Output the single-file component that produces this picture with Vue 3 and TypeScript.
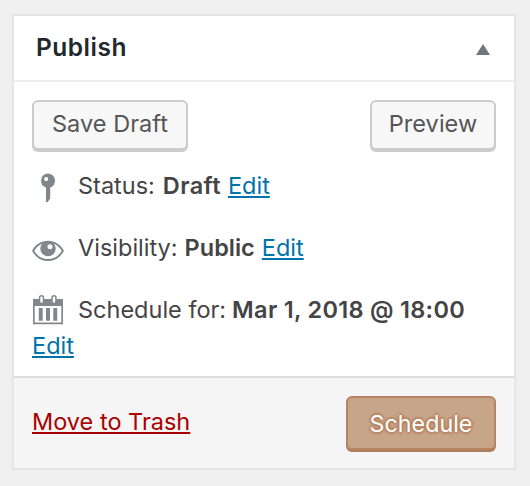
<script setup lang="ts">
interface Detail {
  id: string
  icon: 'key' | 'eye' | 'calendar'
  label: string
  value: string
}

const details: Detail[] = [
  { id: 'status', icon: 'key', label: 'Status:', value: 'Draft' },
  { id: 'visibility', icon: 'eye', label: 'Visibility:', value: 'Public' },
  { id: 'schedule', icon: 'calendar', label: 'Schedule for:', value: 'Mar 1, 2018 @ 18:00' },
]
</script>

<template>
  <section class="panel">
    <header class="panel-header">
      <h2 class="title">Publish</h2>
      <svg class="toggle" viewBox="0 0 14 11" aria-hidden="true"><path d="M7 0L14 11H0Z" /></svg>
    </header>
    <div class="panel-body">
      <div class="actions">
        <button class="button" type="button">Save Draft</button>
        <button class="button preview" type="button">Preview</button>
      </div>
      <div v-for="item in details" :key="item.id" class="detail" :class="item.id">
        <svg class="icon" viewBox="0 0 32 36" aria-hidden="true">
          <path
            v-if="item.icon === 'key'"
            fill-rule="evenodd"
            d="M16 5.5a7.2 7.2 0 0 1 2.2 14v11l-2.5 3.5H14V19.5A7.2 7.2 0 0 1 16 5.5ZM14.2 9a2.1 2.1 0 1 0 0 4.2a2.1 2.1 0 0 0 0-4.2Z"
          />
          <path
            v-else-if="item.icon === 'eye'"
            fill-rule="evenodd"
            d="M16 10.800C23 10.800 28.600 14.600 32 20.800C28.600 27.200 23 31 16 31S3.400 27.200 0 20.800C3.400 14.600 9 10.800 16 10.800ZM10 13.800C6.800 15.200 4.200 17.800 2.300 20.800C5.200 26 10 29 16 29S26.800 26 29.700 20.800C27.800 17.800 25.200 15.200 22 13.800A7.700 7.700 0 1 1 10 13.800ZM18 14.200a2.500 2.500 0 1 0 0 5a2.500 2.500 0 0 0 0-5Z"
          />
          <path
            v-else
            fill-rule="evenodd"
            d="M1 7H6.800V5.700a2.700 2.700 0 0 1 5.400 0V7H19.300V5.700a2.700 2.700 0 0 1 5.400 0V7H31V32.200H1ZM2.700 14V30.500H29.300V14ZM6.800 16H10.700V28.700H6.800ZM14 16H18V28.700H14ZM21.300 16H25.200V28.700H21.300ZM9.500 4.500a1.200 1.200 0 0 0-1.200 1.200V9.500a1.200 1.200 0 0 0 2.400 0V5.700A1.200 1.200 0 0 0 9.500 4.500ZM22 4.500a1.200 1.200 0 0 0-1.200 1.200V9.500a1.200 1.200 0 0 0 2.400 0V5.700A1.200 1.200 0 0 0 22 4.500Z"
          />
        </svg>
        <span class="label">{{ item.label }}</span>
        <strong class="value">{{ item.value }}</strong>
        <a class="edit">Edit</a>
      </div>
    </div>
    <footer class="panel-footer">
      <a class="trash">Move to Trash</a>
      <button class="button primary" type="button">Schedule</button>
    </footer>
  </section>
</template>

<style>
body {
  background: #f0f0f0;
}
</style>

<style scoped>
.panel {
  box-sizing: border-box;
  width: 504px;
  height: 456px;
  margin: 14px 0 0 12px;
  border: 2px solid #e5e5e5;
  background: #fff;
  box-shadow: 0 2px 2px rgba(0, 0, 0, 0.04);
  color: #444;
  font: 24px/36px Inter, "Liberation Sans", sans-serif;
  display: flex;
  flex-direction: column;
}
.panel-header {
  box-sizing: border-box;
  height: 66px;
  padding: 0 24px 2px 22px;
  border-bottom: 2px solid #eee;
  display: flex;
  align-items: center;
  justify-content: space-between;
}
.title {
  margin: 0;
  color: #23282d;
  font-size: 24.5px;
  font-weight: 600;
  letter-spacing: 0.5px;
}
.toggle {
  width: 14px;
  height: 11px;
  margin-top: 5px;
  fill: #72777c;
}
.panel-body {
  flex: 1;
  padding: 18px 18px 0;
}
.actions {
  display: flex;
  justify-content: space-between;
  margin-bottom: 18px;
}
.button {
  box-sizing: border-box;
  width: 156px;
  height: 50px;
  padding: 0 0 2px;
  border: 2px solid #ccc;
  border-radius: 6px;
  background: #f7f7f7;
  box-shadow: 0 2px 0 #ccc;
  color: #555;
  font: 23.5px/36px Inter, "Liberation Sans", sans-serif;
  letter-spacing: 0.05px;
  white-space: nowrap;
}
.preview {
  width: 126px;
}
.detail {
  display: grid;
  grid-template-columns: 46px auto auto 1fr;
  align-items: start;
  height: 36px;
  margin-bottom: 26px;
}
.icon {
  width: 32px;
  height: 36px;
  fill: #82878c;
}
.label,
.value,
.edit {
  font-size: 23.5px;
  white-space: nowrap;
}
.value {
  margin-left: 7px;
  font-weight: 600;
}
.status .value {
  margin-left: 8px;
  letter-spacing: 0.4px;
}
.schedule .value {
  margin-left: 6px;
  letter-spacing: 0.3px;
}
.edit {
  justify-self: start;
  margin-left: 7px;
  color: #0073aa;
  text-decoration: underline;
  text-decoration-thickness: 2px;
  text-underline-offset: 2px;
  text-decoration-skip-ink: none;
}
.schedule {
  height: 72px;
  margin: 0;
  grid-template-columns: 46px auto 1fr;
}
.schedule .edit {
  grid-column: 1 / -1;
  margin-left: 0;
}
.panel-footer {
  box-sizing: border-box;
  height: 92px;
  padding: 18px 18px 0;
  border-top: 2px solid #ddd;
  background: #f5f5f5;
  display: flex;
  justify-content: space-between;
}
.trash {
  margin-top: 8px;
  color: #a00;
  font-size: 23.5px;
  text-decoration: underline;
  text-decoration-thickness: 2px;
  text-underline-offset: 2px;
  text-decoration-skip-ink: none;
}
.primary {
  width: 150px;
  height: 54px;
  padding: 1px 0 0;
  border-color: #b78461;
  background: #c7a589;
  box-shadow: 0 2px 0 #ae7d5b;
  color: #fff;
  font-size: 23.2px;
  text-shadow: 0 -2px 2px #b78461, 2px 0 2px #b78461, 0 2px 2px #b78461, -2px 0 2px #b78461;
}
</style>
